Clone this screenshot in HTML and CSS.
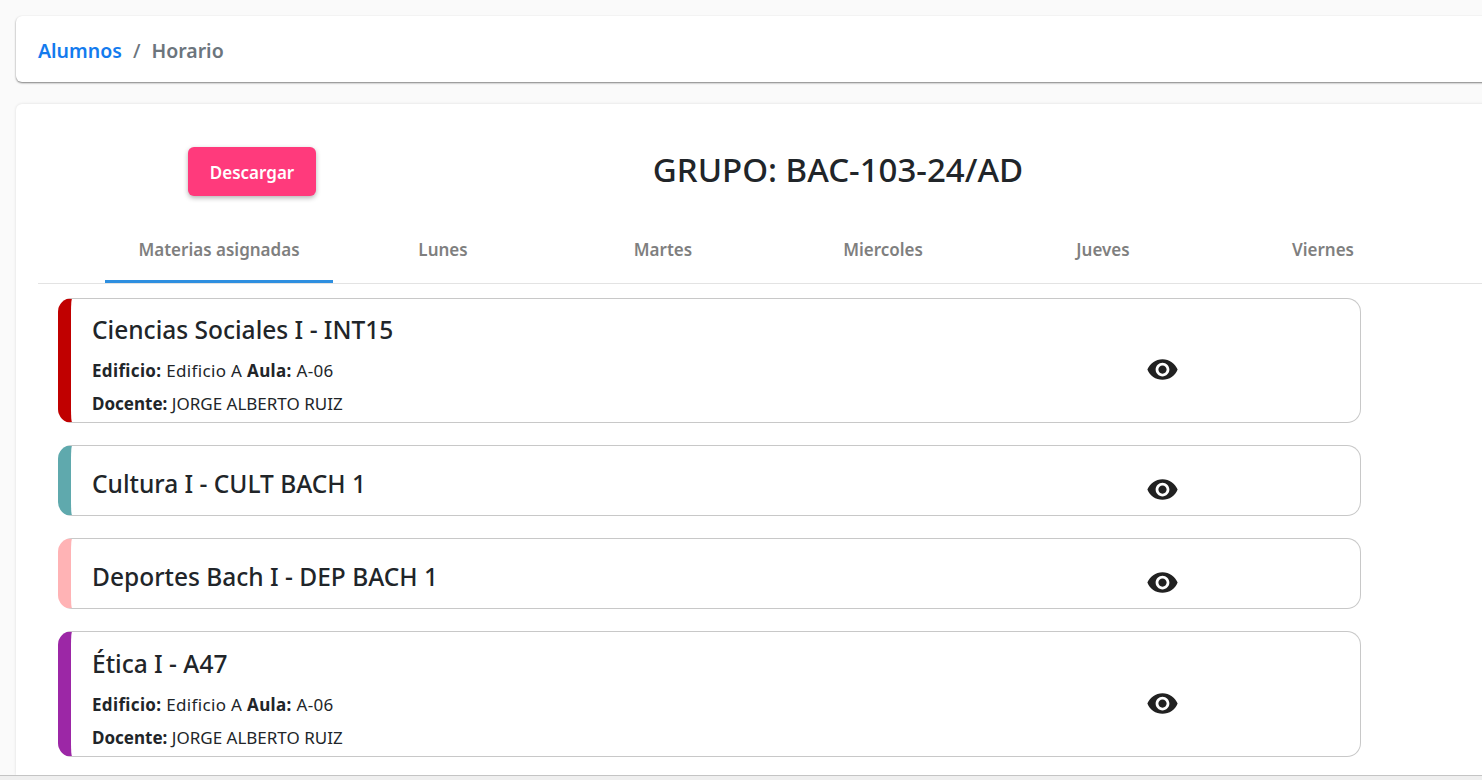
FILE: index.html
```html
<!DOCTYPE html>
<html lang="es">
<head>
<meta charset="utf-8">
<title>Horario</title>
<link rel="stylesheet" href="styles.css">
</head>
<body>
<div class="page">
  <nav class="crumb-card">
    <a class="crumb-link" href="#">Alumnos</a>
    <span class="crumb-sep">/</span>
    <span class="crumb-current">Horario</span>
  </nav>
  <main class="main-card">
    <header class="head">
      <div class="head-btn-col"><button class="btn">Descargar</button></div>
      <h1 class="title">GRUPO: BAC-103-24/AD</h1>
    </header>
    <div class="tabs">
      <div class="tab tab-first active">Materias asignadas</div>
      <div class="tab">Lunes</div>
      <div class="tab">Martes</div>
      <div class="tab">Miercoles</div>
      <div class="tab">Jueves</div>
      <div class="tab">Viernes</div>
    </div>
    <div class="list">
      <article class="item item-red item-full">
        <div class="item-body">
          <h2 class="item-title">Ciencias Sociales I - INT15</h2>
          <p class="item-line item-place"><b>Edificio:</b> Edificio A <b>Aula:</b> A-06</p>
          <p class="item-line"><b>Docente:</b> JORGE ALBERTO RUIZ</p>
        </div>
        <svg class="eye" viewBox="0 0 24 24"><path d="M12 4.5C7 4.5 2.73 7.61 1 12c1.73 4.39 6 7.5 11 7.5s9.27-3.11 11-7.5c-1.73-4.39-6-7.5-11-7.5zM12 17c-2.76 0-5-2.24-5-5s2.24-5 5-5 5 2.24 5 5-2.24 5-5 5zm0-8c-1.66 0-3 1.34-3 3s1.34 3 3 3 3-1.34 3-3-1.34-3-3-3z"/></svg>
      </article>
      <article class="item item-teal item-short">
        <div class="item-body">
          <h2 class="item-title">Cultura I - CULT BACH 1</h2>
        </div>
        <svg class="eye" viewBox="0 0 24 24"><path d="M12 4.5C7 4.5 2.73 7.61 1 12c1.73 4.39 6 7.5 11 7.5s9.27-3.11 11-7.5c-1.73-4.39-6-7.5-11-7.5zM12 17c-2.76 0-5-2.24-5-5s2.24-5 5-5 5 2.24 5 5-2.24 5-5 5zm0-8c-1.66 0-3 1.34-3 3s1.34 3 3 3 3-1.34 3-3-1.34-3-3-3z"/></svg>
      </article>
      <article class="item item-pink item-short">
        <div class="item-body">
          <h2 class="item-title">Deportes Bach I - DEP BACH 1</h2>
        </div>
        <svg class="eye" viewBox="0 0 24 24"><path d="M12 4.5C7 4.5 2.73 7.61 1 12c1.73 4.39 6 7.5 11 7.5s9.27-3.11 11-7.5c-1.73-4.39-6-7.5-11-7.5zM12 17c-2.76 0-5-2.24-5-5s2.24-5 5-5 5 2.24 5 5-2.24 5-5 5zm0-8c-1.66 0-3 1.34-3 3s1.34 3 3 3 3-1.34 3-3-1.34-3-3-3z"/></svg>
      </article>
      <article class="item item-purple item-full">
        <div class="item-body">
          <h2 class="item-title">Ética I - A47</h2>
          <p class="item-line item-place"><b>Edificio:</b> Edificio A <b>Aula:</b> A-06</p>
          <p class="item-line"><b>Docente:</b> JORGE ALBERTO RUIZ</p>
        </div>
        <svg class="eye" viewBox="0 0 24 24"><path d="M12 4.5C7 4.5 2.73 7.61 1 12c1.73 4.39 6 7.5 11 7.5s9.27-3.11 11-7.5c-1.73-4.39-6-7.5-11-7.5zM12 17c-2.76 0-5-2.24-5-5s2.24-5 5-5 5 2.24 5 5-2.24 5-5 5zm0-8c-1.66 0-3 1.34-3 3s1.34 3 3 3 3-1.34 3-3-1.34-3-3-3z"/></svg>
      </article>
    </div>
  </main>
  <div class="bottom-strip"></div>
</div>
</body>
</html>
```
FILE: styles.css
```css
* { box-sizing: border-box; }
html, body { margin: 0; height: 100%; overflow: hidden; }
body { background: #fafafa; font-family: "Noto Sans", sans-serif; color: #212529; }
.page { width: 1520px; padding: 16px 0 0 16px; height: 780px; }
.crumb-card {
  height: 66px; background: #fff; border-radius: 6px;
  box-shadow: 0 1px 2px rgba(0,0,0,.5);
  display: flex; align-items: center; padding: 2px 0 0 22px; font-size: 19.5px; font-weight: 600;
}
.crumb-link { color: #137bee; text-decoration: none; }
.crumb-sep { color: #6c757d; margin: 0 11px; font-weight: 500; }
.crumb-current { color: #6c757d; }
.main-card {
  margin-top: 22px; height: 671px; background: #fff; border-radius: 6px 6px 0 0;
  box-shadow: 0 0 3px rgba(0,0,0,.12); padding: 43px 0 0 22px;
}
.head { display: flex; align-items: center; height: 49px; }
.head-btn-col { width: 278px; padding-left: 150px; flex: none; }
.btn {
  display: block; width: 128px; height: 49px; padding: 2px 0 0; border: 0; border-radius: 6px; background: #ff3a7c; color: #fff;
  font: 600 17px "Noto Sans", sans-serif; box-shadow: 0 2px 5px rgba(0,0,0,.3);
}
.title { margin: 0; width: 1044px; padding-bottom: 5px; text-align: center; font-size: 33px; font-weight: 500; color: #212529; }
.tabs { display: flex; margin-top: 28px; height: 60px; padding-left: 67px; border-bottom: 1px solid #e3e3e3; }
.tab { width: 220px; height: 59px; display: flex; align-items: center; justify-content: center; padding-bottom: 6px; font-size: 17px; font-weight: 600; color: #7f7f7f; border-bottom: 3px solid transparent; }
.tab-first { width: 228px; }
.active { border-bottom-color: #2e8fe0; }
.list { display: flex; flex-direction: column; gap: 22px; margin: 14px 0 0 20px; width: 1303px; }
.item { display: flex; align-items: center; position: relative; border: 1px solid #c8c8c8; border-left: 13px solid; border-radius: 14px; background: #fff; }
.item-full { height: 125px; }
.item-short { height: 71px; }
.item-red { border-left-color: #c00000; }
.item-teal { border-left-color: #5fa9ad; }
.item-pink { border-left-color: #ffb3b5; }
.item-purple { border-left-color: #9c27a6; height: 126px; }
.item-body { flex: 1; padding-left: 21px; }
.item-full .item-body { align-self: flex-start; padding-top: 15px; }
.item-purple .item-body { padding-top: 16px; }
.item-short .item-body { padding-top: 6px; }
.item-title { margin: 0; font-size: 24.5px; font-weight: 500; line-height: 32px; color: #212529; }
.item-line { margin: 12px 0 0; font-size: 17px; line-height: 25px; }
.item-line + .item-line { margin-top: 8px; }
.item-place { letter-spacing: .35px; }
.eye { width: 33px; height: 33px; fill: #212121; flex: none; margin-right: 181.5px; }
.item-full .eye { margin-top: 18px; }
.item-short .eye { margin-top: 18px; }
.bottom-strip { margin-left: -16px; height: 5px; background: #efefef; border-top: 1px solid #c4c4c4; position: relative; }
```
